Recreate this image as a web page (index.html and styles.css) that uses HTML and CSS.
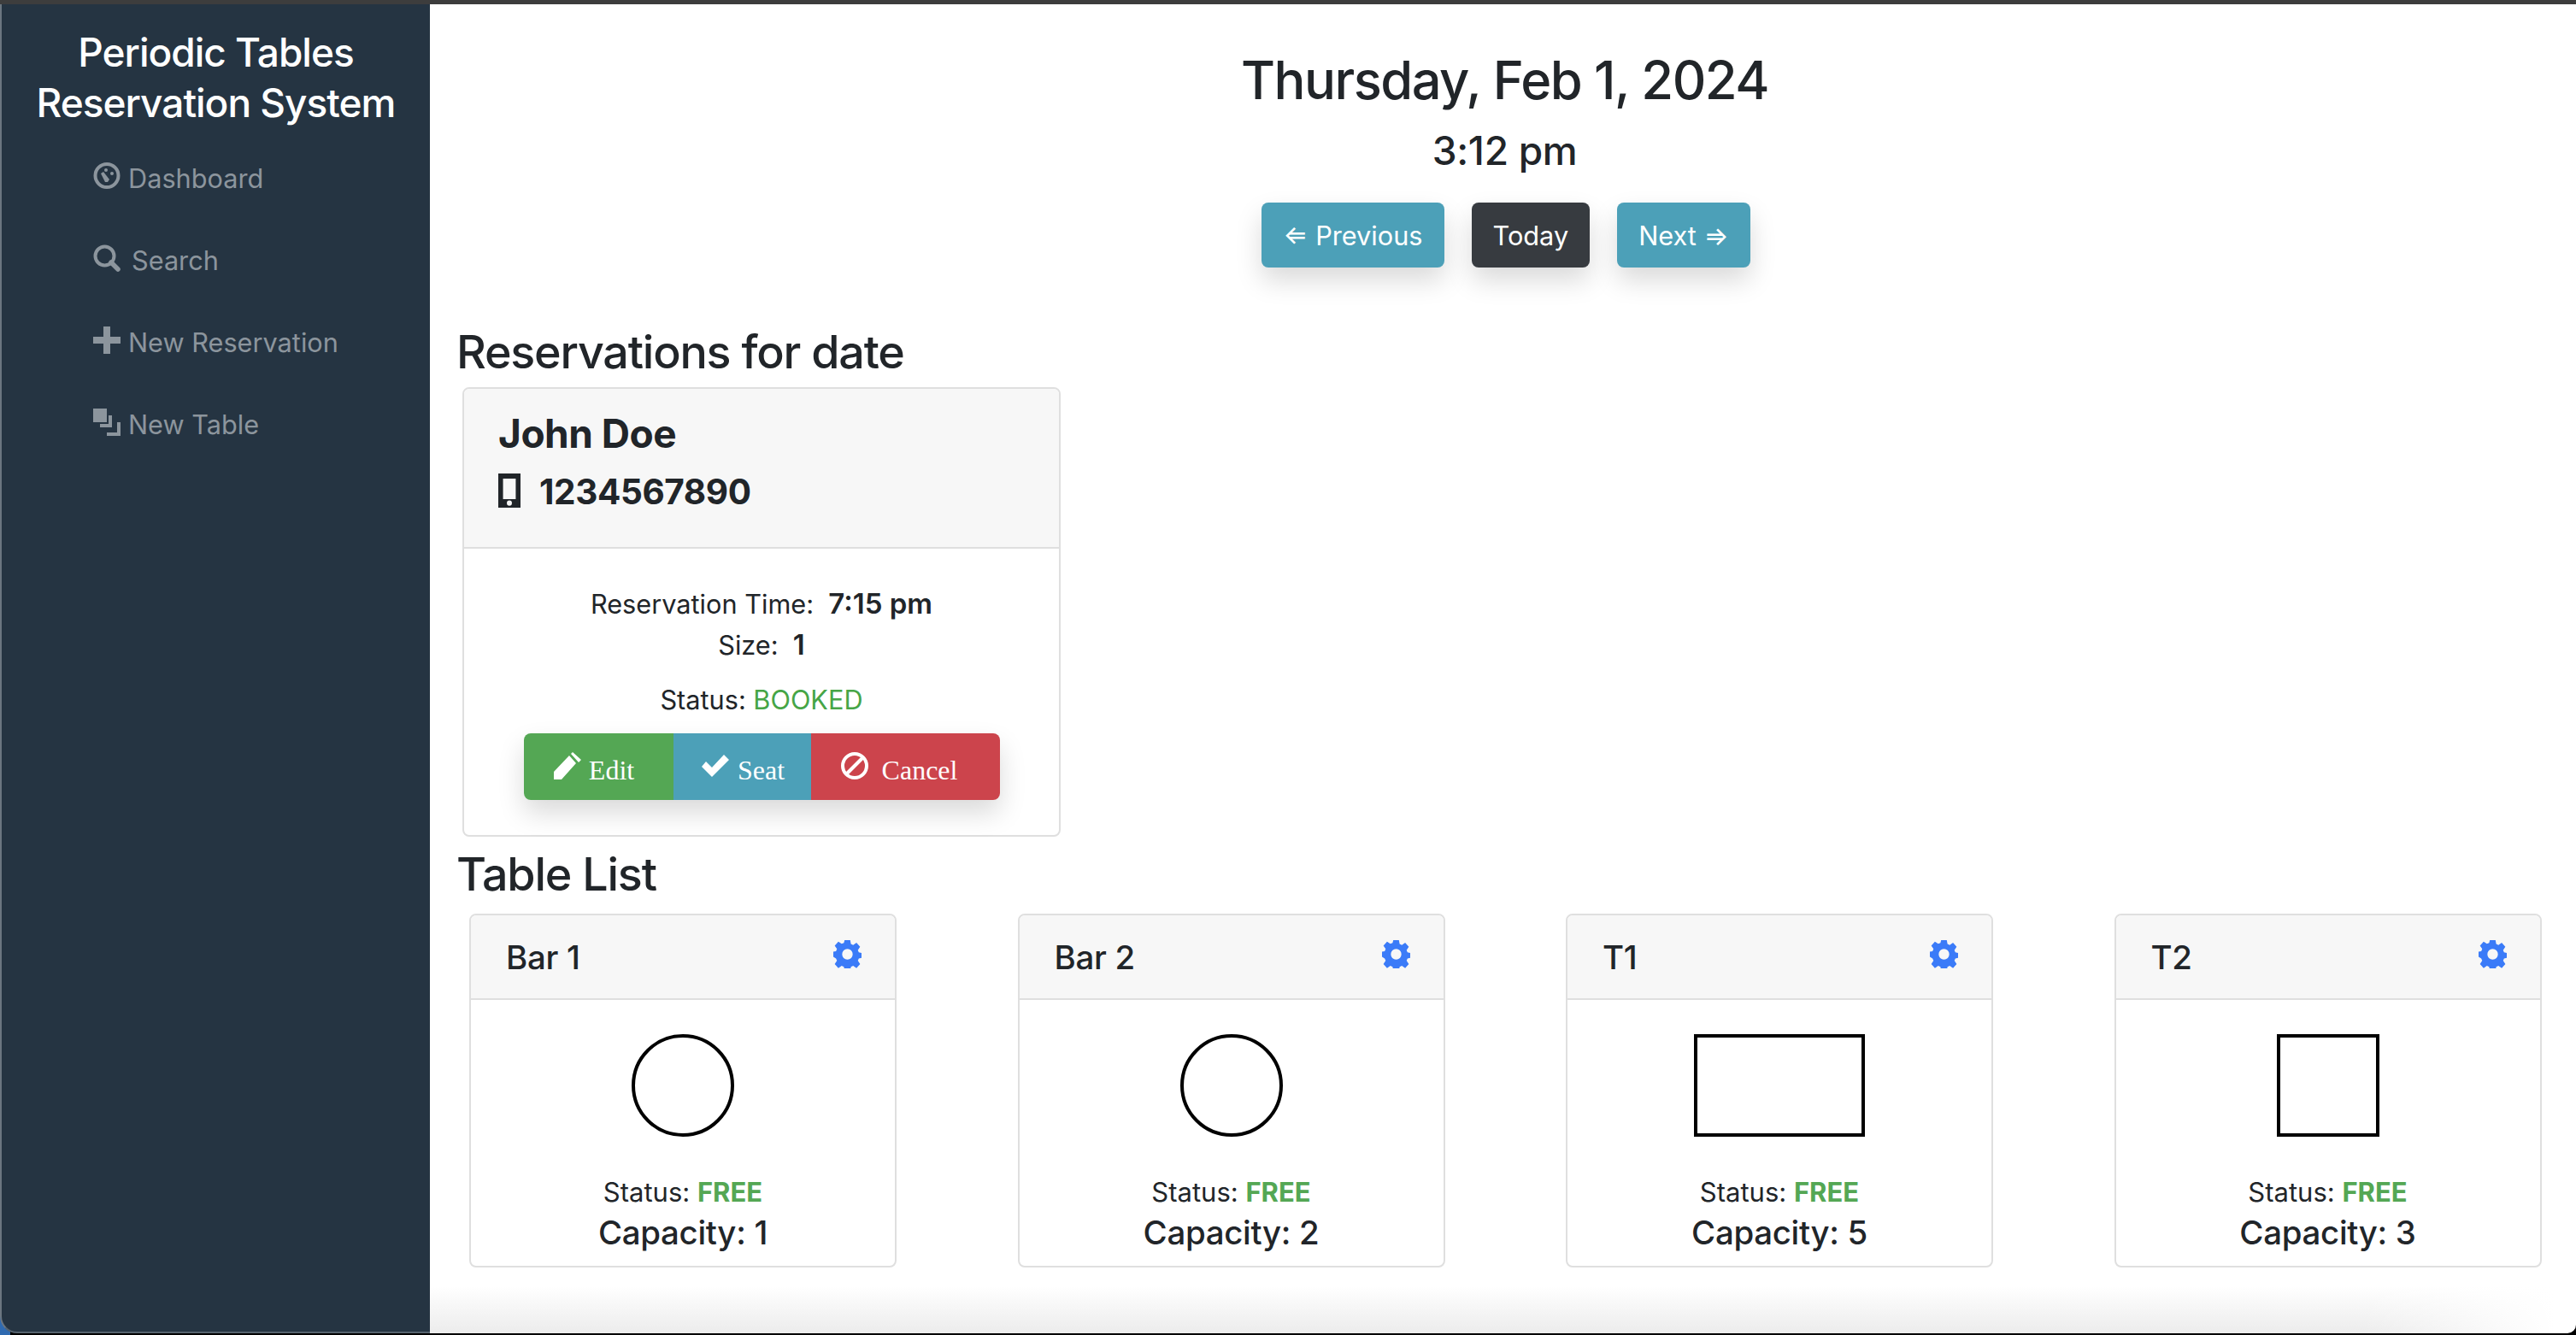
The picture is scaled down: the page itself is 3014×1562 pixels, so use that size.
FILE: index.html
```html
<!DOCTYPE html>
<html lang="en">
<head>
  <meta charset="UTF-8">
  <title>Periodic Tables</title>
  <link rel="stylesheet" href="styles.css">
</head>
<body>
  <div class="window">
    <!-- Side menu -->
    <nav class="sidebar">
      <h1 class="brand">Periodic Tables<br>Reservation System</h1>
      <ul class="menu">
        <li class="menu-item">
          <svg class="menu-icon" viewBox="0 0 32 32"><circle cx="16" cy="15.500" r="13.500" fill="none" stroke="currentColor" stroke-width="4"/><path d="M9 13l3-2 7 9-2 3h-3z" fill="currentColor"/><circle cx="15" cy="9" r="2" fill="currentColor"/><circle cx="22" cy="13" r="2" fill="currentColor"/></svg>
          <span>Dashboard</span>
        </li>
        <li class="menu-item">
          <svg class="menu-icon" viewBox="0 0 32 32"><circle cx="13.500" cy="13.500" r="11" fill="none" stroke="currentColor" stroke-width="4"/><path d="M21 21l8 8" stroke="currentColor" stroke-width="5.500" stroke-linecap="round"/></svg>
          <span class="menu-search">Search</span>
        </li>
        <li class="menu-item">
          <svg class="menu-icon" viewBox="0 0 32 32"><path d="M12 0h8v12h12v8H20v12h-8V20H0v-8h12z" fill="currentColor"/></svg>
          <span>New Reservation</span>
        </li>
        <li class="menu-item">
          <svg class="menu-icon" viewBox="0 0 32 32"><path d="M0 0h16v16H0zM18 8h4v14H8v-4h10zM28 16h4v16H16v-4h12z" fill="currentColor"/></svg>
          <span>New Table</span>
        </li>
      </ul>
    </nav>

    <main class="content">
      <header class="date-header">
        <h2 class="date-title">Thursday, Feb 1, 2024</h2>
        <h4 class="date-time">3:12 pm</h4>
        <div class="date-buttons">
          <button class="btn btn-info">&#8656; Previous</button>
          <button class="btn btn-dark">Today</button>
          <button class="btn btn-info">Next &#8658;</button>
        </div>
      </header>

      <h3 class="section-title section-reservations">Reservations for date</h3>
      <section class="card reservation-card">
        <div class="card-header reservation-header">
          <h4 class="guest-name">John Doe</h4>
          <h5 class="guest-phone">
            <svg class="phone-icon" viewBox="0 0 14 20" preserveAspectRatio="none"><path fill-rule="evenodd" d="M0 0h14v20H0zM3 3v12h8V3zM7 15.700a1.600 1.600 0 1 0 0 3.200 1.600 1.600 0 0 0 0-3.200z" fill="currentColor"/></svg>
            1234567890
          </h5>
        </div>
        <div class="card-body reservation-body">
          <p class="line">Reservation Time:&nbsp; <b>7:15 pm</b></p>
          <p class="line">Size:&nbsp; <b>1</b></p>
          <p class="line status-line">Status: <span class="text-success">BOOKED</span></p>
          <div class="btn-group">
            <button class="group-btn btn-edit">
              <svg class="group-icon" viewBox="0 0 32 32"><path d="M0 32v-9L18 4l8 9L9 32zM22 0l10 9-3 3-9-10z" fill="currentColor"/></svg>
              <span>Edit</span>
            </button>
            <button class="group-btn btn-seat">
              <svg class="group-icon" viewBox="0 0 32 26"><path d="M0 14l5-6 7 7L26 0l6 6-20 20z" fill="currentColor"/></svg>
              <span>Seat</span>
            </button>
            <button class="group-btn btn-cancel">
              <svg class="group-icon" viewBox="0 0 32 32"><circle cx="16" cy="16" r="14" fill="none" stroke="currentColor" stroke-width="4"/><path d="M7 25L25 7" stroke="currentColor" stroke-width="4"/></svg>
              <span class="cancel-text">Cancel</span>
            </button>
          </div>
        </div>
      </section>

      <h3 class="section-title section-tables">Table List</h3>
      <section class="table-grid">
        <article class="card table-card">
          <div class="card-header table-header">
            <h5 class="table-name">Bar 1</h5>
            <svg class="gear" viewBox="0 0 24 24"><use href="#gear-shape"/></svg>
          </div>
          <div class="card-body table-body">
            <div class="shape shape-circle"></div>
            <p class="table-status">Status: <b class="text-free">FREE</b></p>
            <h5 class="table-capacity">Capacity: 1</h5>
          </div>
        </article>
        <article class="card table-card">
          <div class="card-header table-header">
            <h5 class="table-name">Bar 2</h5>
            <svg class="gear" viewBox="0 0 24 24"><use href="#gear-shape"/></svg>
          </div>
          <div class="card-body table-body">
            <div class="shape shape-circle"></div>
            <p class="table-status">Status: <b class="text-free">FREE</b></p>
            <h5 class="table-capacity">Capacity: 2</h5>
          </div>
        </article>
        <article class="card table-card">
          <div class="card-header table-header">
            <h5 class="table-name">T1</h5>
            <svg class="gear" viewBox="0 0 24 24"><use href="#gear-shape"/></svg>
          </div>
          <div class="card-body table-body">
            <div class="shape shape-rect"></div>
            <p class="table-status">Status: <b class="text-free">FREE</b></p>
            <h5 class="table-capacity">Capacity: 5</h5>
          </div>
        </article>
        <article class="card table-card">
          <div class="card-header table-header">
            <h5 class="table-name">T2</h5>
            <svg class="gear" viewBox="0 0 24 24"><use href="#gear-shape"/></svg>
          </div>
          <div class="card-body table-body">
            <div class="shape shape-square"></div>
            <p class="table-status">Status: <b class="text-free">FREE</b></p>
            <h5 class="table-capacity">Capacity: 3</h5>
          </div>
        </article>
      </section>
    </main>
  </div>

  <svg class="defs" width="0" height="0">
    <symbol id="gear-shape" viewBox="0 0 24 24">
      <path fill="currentColor" fill-rule="evenodd" d="M9.600 0h4.800l.6 3.300 1.900.8 2.800-1.900 3.100 3.500-1.900 2.800.8 1.900 2.300.5v4.200l-2.300.5-.8 1.900 1.900 2.800-3.100 3.500-2.800-1.900-1.900.8-.6 3.300H9.600l-.6-3.300-1.900-.8-2.800 1.900-3.100-3.500 1.900-2.800-.8-1.900L0 14.100V9.900l2.300-.5.8-1.900-1.900-2.800 3.100-3.500 2.800 1.900 1.900-.8zM12 7.500a4.500 4.500 0 1 0 0 9 4.500 4.500 0 0 0 0-9z"/>
    </symbol>
  </svg>
</body>
</html>
```

FILE: styles.css
```css
html, body {
  margin: 0;
  height: 100%;
}
body {
  font-family: Inter, "Liberation Sans", sans-serif;
  font-size: 30.7px;
  color: #212529;
  background: #000;
  overflow: hidden;
}
h1, h2, h3, h4, h5, p {
  margin: 0;
}
.window {
  display: flex;
  height: 1562px;
  padding-bottom: 2px;
  border-top: 5px solid #3d3d3d;
  box-sizing: border-box;
  background: linear-gradient(90deg, #2f6ab0 12px, #000 12px);
}
.defs {
  position: absolute;
}

/* sidebar */
.sidebar {
  width: 503px;
  flex-shrink: 0;
  background: #253442;
  border-left: 2px solid #6b7680;
  border-bottom: 2px solid #56636f;
  border-bottom-left-radius: 20px;
  box-sizing: border-box;
}
.brand {
  margin-top: 27px;
  font-size: 46px;
  font-weight: 550;
  line-height: 59px;
  letter-spacing: -1px;
  color: #fff;
  text-align: center;
}
.menu {
  list-style: none;
  margin: 10px 0 0;
  padding: 0 0 0 107px;
}
.menu-item {
  display: flex;
  align-items: center;
  gap: 9px;
  height: 96px;
  color: #8c959d;
}
.menu-icon {
  width: 32px;
  height: 32px;
  margin-top: -4px;
  flex-shrink: 0;
}
.menu-search {
  margin-left: 4px;
}

/* main */
.content {
  flex: 1;
  min-width: 0;
  padding: 0 30px 0 31px;
  background:
    linear-gradient(90deg, rgba(255, 255, 255, 0) 90%, #fff 99%),
    linear-gradient(#fff 1500px, #ececec 1555px);
  border-bottom-right-radius: 10px;
  box-sizing: border-box;
}
.date-header {
  padding-left: 3px;
  text-align: center;
}
.date-title {
  margin-top: 52px;
  font-size: 61.4px;
  font-weight: 550;
  line-height: 74px;
  letter-spacing: -1.5px;
}
.date-time {
  margin-top: 18px;
  font-size: 46px;
  font-weight: 550;
  line-height: 55px;
  letter-spacing: -.3px;
}
.date-buttons {
  display: flex;
  justify-content: center;
  gap: 32px;
  margin-top: 33px;
  padding-left: 3px;
}
.btn {
  height: 76px;
  padding: 0 25px;
  border: 0;
  border-radius: 8px;
  font-family: inherit;
  font-size: 30.7px;
  color: #fff;
  box-shadow: 0 15px 31px rgba(0, 0, 0, .15);
}
.btn-info {
  background: #4ca0b8;
}
.btn-dark {
  background: #373b40;
}

.section-title {
  font-size: 53.8px;
  font-weight: 550;
  line-height: 64px;
  letter-spacing: -1.2px;
}
.section-reservations {
  margin-top: 67px;
}
.section-tables {
  margin-top: 12px;
}

.card {
  border: 2px solid #dfdfdf;
  border-radius: 8px;
  background: #fff;
  box-sizing: border-box;
}
.card-header {
  background: #f7f7f7;
  border-bottom: 2px solid #dfdfdf;
  border-radius: 6px 6px 0 0;
}

/* reservation */
.reservation-card {
  width: 700px;
  height: 526px;
  margin: 9px 0 0 7px;
}
.reservation-header {
  height: 187px;
  padding: 25px 40px 0;
  box-sizing: border-box;
}
.guest-name {
  font-size: 46px;
  font-weight: 700;
  line-height: 55px;
  letter-spacing: -.5px;
}
.guest-phone {
  display: flex;
  align-items: center;
  gap: 22px;
  margin-top: 18px;
  font-size: 40.5px;
  font-weight: 700;
  line-height: 46px;
  letter-spacing: -.4px;
}
.phone-icon {
  width: 26px;
  height: 40px;
  margin-top: -5px;
}
.reservation-body {
  padding-top: 41px;
  text-align: center;
}
.line {
  line-height: 48px;
}
.line b {
  font-size: 33px;
  font-weight: 600;
  line-height: 1;
}
.status-line {
  margin-top: 16px;
}
.text-success {
  color: #46a546;
}
.btn-group {
  display: flex;
  width: 557px;
  height: 78px;
  margin: 15px auto 0;
  border-radius: 8px;
  overflow: hidden;
  box-shadow: 0 15px 31px rgba(0, 0, 0, .15);
}
.group-btn {
  display: flex;
  align-items: center;
  justify-content: center;
  padding: 0;
  border: 0;
  color: #fff;
  font-family: "Liberation Serif", serif;
  font-size: 32px;
}
.group-btn span {
  margin-top: 8px;
}
.group-icon {
  flex-shrink: 0;
  width: 32px;
  height: 32px;
  margin-top: -2px;
}
.btn-edit {
  width: 175px;
  gap: 9px;
  padding-right: 10px;
  background: #54a754;
}
.btn-seat {
  width: 161px;
  gap: 10px;
  padding-left: 3px;
  background: #4ca0b8;
}
.btn-seat .group-icon {
  height: 26px;
}
.btn-cancel {
  flex: 1;
  gap: 16px;
  padding-right: 14px;
  background: #cc444c;
}

/* tables */
.table-grid {
  display: grid;
  grid-template-columns: repeat(4, 500px);
  gap: 141.500px;
  margin: 14px 0 0 15px;
}
.table-card {
  height: 414px;
}
.table-header {
  display: flex;
  justify-content: space-between;
  align-items: center;
  height: 99px;
  padding: 0 39px 0 41px;
  box-sizing: border-box;
}
.table-name {
  font-size: 38.4px;
  font-weight: 500;
  letter-spacing: -.3px;
}
.gear {
  width: 33px;
  height: 33px;
  margin-top: -6px;
  color: #3b7bf8;
}
.table-body {
  display: flex;
  flex-direction: column;
  align-items: center;
  padding-top: 40px;
}
.shape {
  height: 120px;
  border: 4px solid #000;
  box-sizing: border-box;
}
.shape-circle {
  width: 120px;
  border-radius: 50%;
}
.shape-rect {
  width: 200px;
}
.shape-square {
  width: 120px;
}
.table-status {
  margin-top: 46px;
  font-size: 31px;
  line-height: 37px;
}
.text-free {
  color: #54a754;
  font-weight: 700;
}
.table-capacity {
  margin-top: 6px;
  font-size: 38.4px;
  font-weight: 500;
  line-height: 46px;
  letter-spacing: -.3px;
}
```
